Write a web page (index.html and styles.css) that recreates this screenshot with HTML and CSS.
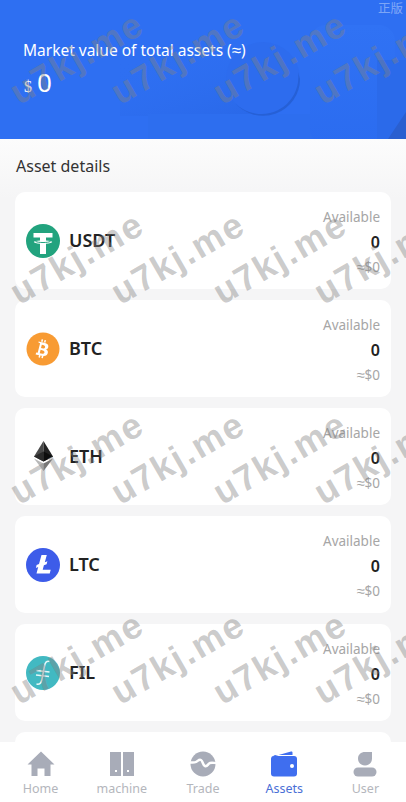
FILE: index.html
```html
<!DOCTYPE html>
<html lang="en">
<head>
    <meta charset="UTF-8">
    <meta name="viewport" content="width=device-width, initial-scale=1.0">
    <title>Assets</title>
    <link rel="stylesheet" href="styles.css">
</head>
<body>
    <div class="app">
        <header class="banner">
            <div class="banner-deco">
                <svg viewBox="0 0 406 139" width="406" height="139">
                    <defs>
                        <linearGradient id="shadeA" x1="0" y1="0" x2="1" y2="1">
                            <stop offset="0" stop-color="#2e6ff2" stop-opacity="0"/>
                            <stop offset="1" stop-color="#2460dc"/>
                        </linearGradient>
                        <linearGradient id="shadeB" x1="0" y1="0" x2="0" y2="1">
                            <stop offset="0" stop-color="#3072f4"/>
                            <stop offset="1" stop-color="#2b6cf0"/>
                        </linearGradient>
                    </defs>
                    <rect x="120" y="60" width="150" height="56" fill="url(#shadeA)" opacity="0.5"/>
                    <rect x="148" y="114" width="170" height="25" fill="#2d6eef"/>
                    <rect x="310" y="25" width="85" height="120" rx="16" fill="url(#shadeB)"/>
                    <rect x="377" y="60" width="29" height="79" fill="#2b6aea"/>
                    <path d="M388 139L406 112V139Z" fill="#2a5fd0"/>
                    <circle cx="263" cy="79" r="37" fill="#2d6cee"/>
                    <path d="M235 103A37 37 0 0 0 300 79L298 72A37 37 0 0 1 235 103Z" fill="#2660d6"/>
                </svg>
            </div>
            <span class="edition">正版</span>
            <p class="banner-title">Market value of total assets (<span class="approx">≈</span>)</p>
            <p class="banner-value"><span class="currency">$</span>0</p>
        </header>

        <main class="assets">
            <h2 class="assets-title">Asset details</h2>

            <div class="card">
                <div class="coin">
                    <svg class="coin-icon" viewBox="0 0 34 34">
                        <circle cx="17" cy="17" r="17" fill="#22a37e"/>
                        <path d="M7.500 9h19v4.500h-6.500v3c3.500.2 6.200.8 6.200 1.600s-2.700 1.400-6.200 1.600V30h-6V19.700c-3.500-.2-6.200-.8-6.200-1.600s2.700-1.400 6.200-1.600v-3H7.500z" fill="#fff"/>
                        <path d="M9.500 17.400c1.800.8 4.300 1.100 7.500 1.100s5.700-.3 7.500-1.100" fill="none" stroke="#22a37e" stroke-width="1"/>
                    </svg>
                    <span class="coin-name">USDT</span>
                </div>
                <div class="balance">
                    <span class="balance-label">Available</span>
                    <span class="balance-amount">0</span>
                    <span class="balance-label"><span class="approx">≈</span>$0</span>
                </div>
            </div>

            <div class="card">
                <div class="coin">
                    <svg class="coin-icon" viewBox="0 0 34 34">
                        <circle cx="17" cy="17" r="16.500" fill="#f89b33"/>
                        <path d="M12.500 9.500l5.800 1.300c3 .7 4.400 2.100 4 4.100-.3 1.400-1.200 2.200-2.500 2.400 1.700.8 2.400 2.100 2 3.800-.6 2.500-2.700 3.300-6.200 2.600l-6-1.300.6-2 1.500.3 2.400-9.500-1.500-.4z" fill="#fff"/>
                        <path d="M15.800 12.800l-.8 3.300c1.700.4 3.700.7 4.100-.9.400-1.500-1.600-2-3.300-2.400zM14.600 17.700l-.9 3.600c2 .5 4.300.9 4.800-.8.400-1.700-1.800-2.300-3.900-2.800z" fill="#f89b33"/>
                        <path d="M16.400 7.400l-.6 2.400M19.300 8.100l-.6 2.400M13.800 23l-.6 2.500M16.700 23.700l-.6 2.400" stroke="#fff" stroke-width="1.500"/>
                    </svg>
                    <span class="coin-name">BTC</span>
                </div>
                <div class="balance">
                    <span class="balance-label">Available</span>
                    <span class="balance-amount">0</span>
                    <span class="balance-label"><span class="approx">≈</span>$0</span>
                </div>
            </div>

            <div class="card">
                <div class="coin">
                    <svg class="coin-icon" viewBox="0 0 34 34">
                        <path d="M17.500 1L8 16.500l9.500 5z" fill="#4a4a4a"/>
                        <path d="M17.500 1L27 16.500l-9.500 5z" fill="#222"/>
                        <path d="M17.500 11.500L8 16.500l9.500 5z" fill="#2a2a2a"/>
                        <path d="M17.500 11.500l9.500 5-9.500 5z" fill="#0d0d0d"/>
                        <path d="M8 18.500L17.500 31v-7.500z" fill="#b8b8b8"/>
                        <path d="M27 18.500L17.500 31v-7.500z" fill="#777"/>
                    </svg>
                    <span class="coin-name">ETH</span>
                </div>
                <div class="balance">
                    <span class="balance-label">Available</span>
                    <span class="balance-amount">0</span>
                    <span class="balance-label"><span class="approx">≈</span>$0</span>
                </div>
            </div>

            <div class="card">
                <div class="coin">
                    <svg class="coin-icon" viewBox="0 0 34 34">
                        <circle cx="17" cy="17" r="17" fill="#3d5ce9"/>
                        <path d="M15.500 7h5.300l-2 7.300 2.600-1-.8 3-2.700 1-1.200 4.500h8l-1 3.700H10.500l1.700-6.500-2.300.9.700-2.900 2.400-.9z" fill="#fff"/>
                    </svg>
                    <span class="coin-name">LTC</span>
                </div>
                <div class="balance">
                    <span class="balance-label">Available</span>
                    <span class="balance-amount">0</span>
                    <span class="balance-label"><span class="approx">≈</span>$0</span>
                </div>
            </div>

            <div class="card">
                <div class="coin">
                    <svg class="coin-icon" viewBox="0 0 34 34">
                        <circle cx="17" cy="17" r="17" fill="#42b9c2"/>
                        <path d="M23.500 5.500c-3-.8-4.400 1-5 4.500l-2.700 14c-.6 3-2 4.800-5.300 4" fill="none" stroke="#e6f7f8" stroke-width="1.500"/>
                        <path d="M10.500 14.500l13 1.500M10 19l13 1.500" fill="none" stroke="#e6f7f8" stroke-width="1.500"/>
                    </svg>
                    <span class="coin-name">FIL</span>
                </div>
                <div class="balance">
                    <span class="balance-label">Available</span>
                    <span class="balance-amount">0</span>
                    <span class="balance-label"><span class="approx">≈</span>$0</span>
                </div>
            </div>

            <div class="card"></div>
        </main>

        <nav class="tabbar">
            <a class="tab">
                <svg class="tab-icon" viewBox="0 0 28 26">
                    <path d="M14 .5L.5 13.500h4V25h6v-7.500h7V25h6V13.500h4z" fill="#a8acb8"/>
                </svg>
                <span>Home</span>
            </a>
            <a class="tab">
                <svg class="tab-icon" viewBox="0 0 28 26">
                    <path d="M2 1h11v24H2zM15 1h11v24H15z" fill="#a8acb8"/>
                    <path d="M7 19h2v2H7zM19 19h2v2h-2z" fill="#fff"/>
                </svg>
                <span>machine</span>
            </a>
            <a class="tab">
                <svg class="tab-icon" viewBox="0 0 28 26">
                    <circle cx="14" cy="13" r="12.500" fill="#a8acb8"/>
                    <path d="M0 11.500c3 0 5 .5 7-.5s3-3 5-2 1.500 5 4 6 3-2.500 5-3 4 0 7 0" fill="none" stroke="#fff" stroke-width="2.500"/>
                </svg>
                <span>Trade</span>
            </a>
            <a class="tab tab-active">
                <svg class="tab-icon" viewBox="0 0 28 26">
                    <path d="M1.500 6L21 .5c1-.2 1.500.3 1.500 1V4H5z" fill="#3f6eef"/>
                    <rect x="1" y="5" width="26" height="20.500" rx="3" fill="#3f6eef"/>
                    <circle cx="22" cy="15" r="2" fill="#fff"/>
                </svg>
                <span>Assets</span>
            </a>
            <a class="tab">
                <svg class="tab-icon" viewBox="0 0 28 26">
                    <path d="M14 1h7v6.500c0 4-3 7-7 7s-7-3-7-7 3-6.500 7-6.500z" fill="#a8acb8"/>
                    <rect x="2.500" y="16.500" width="23" height="9" rx="4.500" fill="#a8acb8"/>
                </svg>
                <span>User</span>
            </a>
        </nav>

        <div class="watermark">
            <span>u7kj.me</span><span>u7kj.me</span><span>u7kj.me</span><span>u7kj.me</span>
            <span>u7kj.me</span><span>u7kj.me</span><span>u7kj.me</span><span>u7kj.me</span>
            <span>u7kj.me</span><span>u7kj.me</span><span>u7kj.me</span><span>u7kj.me</span>
            <span>u7kj.me</span><span>u7kj.me</span><span>u7kj.me</span><span>u7kj.me</span>
        </div>
    </div>
</body>
</html>
```

FILE: styles.css
```css
* {
    box-sizing: border-box;
}
html, body {
    margin: 0;
    padding: 0;
    height: 100%;
    overflow: hidden;
}
body {
    font-family: "Noto Sans", "Noto Sans CJK SC", sans-serif;
    background-color: #f5f5f6;
}
.app {
    position: relative;
    height: 100vh;
    display: flex;
    flex-direction: column;
    overflow: hidden;
}
.banner {
    position: relative;
    flex: none;
    height: 139px;
    padding: 40px 23px 0;
    background-color: #2e6ff2;
    color: #fff;
    overflow: hidden;
}
.banner-deco {
    position: absolute;
    left: 0;
    top: 0;
    line-height: 0;
}
.edition {
    position: absolute;
    top: -2px;
    right: 3px;
    font-size: 12.500px;
    color: rgba(255,255,255,0.4);
}
.banner-title {
    position: relative;
    margin: 0;
    font-size: 15.500px;
    line-height: 21px;
}
.approx {
    font-family: "Liberation Sans", sans-serif;
    font-size: 1.100em;
}
.banner-value {
    position: relative;
    margin: 4px 0 0;
    font-size: 26px;
    line-height: 34px;
}
.currency {
    font-family: "Liberation Serif", serif;
    font-size: 16px;
    margin: 0 5px 0 1px;
}
.assets {
    flex: 1;
    min-height: 0;
    padding: 0 15px;
    overflow: hidden;
    background: linear-gradient(#fcfcfc, #f5f5f6 60px);
}
.assets-title {
    margin: 0;
    padding: 15px 1px 14px;
    font-size: 16px;
    font-weight: 400;
    line-height: 24px;
    color: #333;
}
.card {
    height: 97px;
    margin-bottom: 11px;
    padding: 0 11px;
    display: flex;
    align-items: center;
    justify-content: space-between;
    background: #fff;
    border-radius: 10px;
}
.coin {
    display: flex;
    align-items: center;
    gap: 9px;
}
.coin-icon {
    width: 34px;
    height: 34px;
    flex: none;
}
.coin-name {
    position: relative;
    top: -1px;
    font-size: 18px;
    font-weight: 600;
    color: #222;
}
.balance {
    display: flex;
    flex-direction: column;
    align-items: flex-end;
    gap: 5px;
    padding-top: 2px;
}
.balance-label {
    font-size: 13.500px;
    line-height: 20px;
    color: #a6a6a6;
}
.balance-amount {
    font-size: 16px;
    font-weight: 600;
    line-height: 20px;
    color: #222;
}
.tabbar {
    flex: none;
    height: 60px;
    display: grid;
    grid-template-columns: repeat(5, 1fr);
    background: #fff;
}
.tab {
    display: flex;
    flex-direction: column;
    align-items: center;
    padding-top: 9px;
    font-size: 12.500px;
    line-height: 18px;
    color: #b4b6bc;
}
.tab-icon {
    width: 28px;
    height: 26px;
    margin-bottom: 3px;
}
.tab-active {
    color: #4a6fd6;
}
/* tiled overlay, sits over the whole page and runs off the right edge */
.watermark {
    position: absolute;
    left: 26px;
    top: -42px;
    display: grid;
    grid-template-columns: repeat(4, 101.500px);
    grid-auto-rows: 200px;
    pointer-events: none;
}
.watermark span {
    align-self: center;
    justify-self: center;
    font-family: "Liberation Sans", sans-serif;
    font-size: 36px;
    font-weight: 700;
    letter-spacing: 2px;
    line-height: 1;
    white-space: nowrap;
    color: rgba(130,130,130,0.42);
    transform: rotate(-30deg);
}
```
